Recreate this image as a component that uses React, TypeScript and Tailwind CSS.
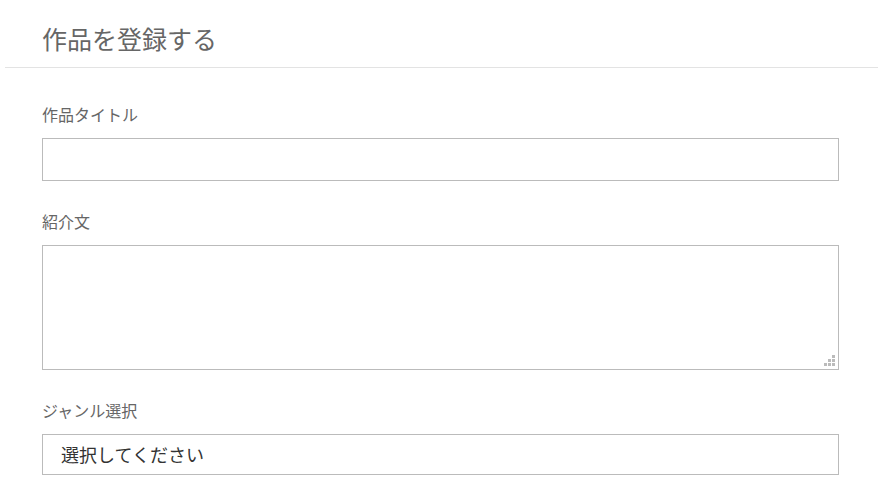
export default function App() {
  return (
    <div
      className="min-h-screen bg-white text-[#666]"
      style={{ fontFamily: '"Noto Sans CJK JP", "Noto Sans", sans-serif' }}
    >
      <div className="mx-[5px] border-b border-[#e3e3e3] pl-[37px] pt-[20px] pb-[11px]">
        <h1 className="text-[25px] leading-[36px] font-normal text-[#666]">作品を登録する</h1>
      </div>

      <form className="pl-[42px] pr-[44px] pt-[34px]">
        <Field label="作品タイトル">
          <input type="text" className="block h-[43px] w-full border border-[#bbb] px-3 outline-none" />
        </Field>

        <Field label="紹介文" className="mt-[28px]">
          <div className="relative">
            <textarea className="block h-[125px] w-full resize-none border border-[#bbb] px-3 py-2 outline-none" />
            {/* resize grip */}
            <svg className="pointer-events-none absolute bottom-[4px] right-[3px]" width="12" height="11" viewBox="0 0 12 11">
              <g fill="#bbb">
                <rect x="8" y="0" width="3" height="3" />
                <rect x="4" y="4" width="3" height="3" />
                <rect x="8" y="4" width="3" height="3" />
                <rect x="0" y="8" width="3" height="3" />
                <rect x="4" y="8" width="3" height="3" />
                <rect x="8" y="8" width="3" height="3" />
              </g>
            </svg>
          </div>
        </Field>

        <Field label="ジャンル選択" className="mt-[28px]">
          <select className="block h-[41px] w-full appearance-none rounded-none border border-[#bbb] bg-white pl-[18px] text-[18px] text-[#333] outline-none">
            <option>選択してください</option>
          </select>
        </Field>
      </form>
    </div>
  );
}

function Field({
  label,
  className = "",
  children,
}: {
  label: string;
  className?: string;
  children: React.ReactNode;
}) {
  return (
    <div className={className}>
      <label className="mb-[12px] block text-[16px] leading-[24px] text-[#666]">{label}</label>
      {children}
    </div>
  );
}
